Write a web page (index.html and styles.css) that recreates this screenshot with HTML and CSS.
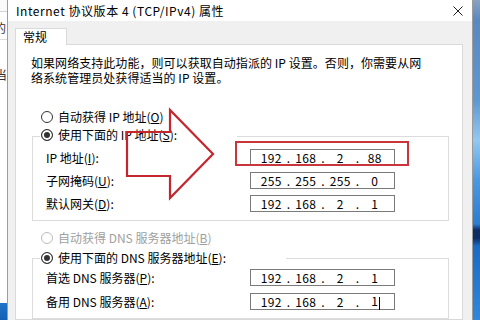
FILE: index.html
```html
<!DOCTYPE html>
<html lang="zh-CN">
<head>
<meta charset="utf-8">
<title>Internet 协议版本 4 (TCP/IPv4) 属性</title>
<link rel="stylesheet" href="styles.css">
</head>
<body>
<div class="screen">
  <div class="bgwin">
    <div class="bg-bar"></div>
    <div class="bg-row bg-r1">的</div>
    <div class="bg-row bg-r2">当</div>
    <div class="bg-fill"></div>
    <div class="bg-desk"></div>
  </div>
  <div class="dialog">
    <div class="titlebar">
      <span class="title">Internet 协议版本 4 (TCP/IPv4) 属性</span>
      <svg class="close" width="10" height="10" viewBox="0 0 10 10"><path d="M0.5 0.5L9.5 9.5M9.5 0.5L0.5 9.5" stroke="#222" stroke-width="1" fill="none"/></svg>
    </div>
    <div class="body">
      <div class="tabs"><div class="tab">常规</div></div>
      <div class="panel">
        <div class="intro">
          <div class="intro-line">如果网络支持此功能，则可以获取自动指派的 IP 设置。否则，你需要从网</div>
          <div class="intro-line">络系统管理员处获得适当的 IP 设置。</div>
        </div>
        <div class="radio standalone r-ip"><span class="dot"></span>自动获得 IP 地址(<u>O</u>)</div>
        <div class="group g-ip">
          <div class="radio legend lg-ip"><span class="dot on"></span>使用下面的 IP 地址(<u>S</u>):</div>
          <div class="rows rows-ip">
            <div class="row"><span class="label">IP 地址(<u>I</u>):</span><div class="field"><span class="seg">192</span><span class="sep">.</span><span class="seg">168</span><span class="sep">.</span><span class="seg">2</span><span class="sep">.</span><span class="seg">88</span></div></div>
            <div class="row"><span class="label">子网掩码(<u>U</u>):</span><div class="field"><span class="seg">255</span><span class="sep">.</span><span class="seg">255</span><span class="sep">.</span><span class="seg">255</span><span class="sep">.</span><span class="seg">0</span></div></div>
            <div class="row"><span class="label">默认网关(<u>D</u>):</span><div class="field"><span class="seg">192</span><span class="sep">.</span><span class="seg">168</span><span class="sep">.</span><span class="seg">2</span><span class="sep">.</span><span class="seg">1</span></div></div>
          </div>
        </div>
        <div class="radio standalone disabled r-dns"><span class="dot"></span>自动获得 DNS 服务器地址(<u>B</u>)</div>
        <div class="group g-dns">
          <div class="radio legend lg-dns"><span class="dot on"></span>使用下面的 DNS 服务器地址(<u>E</u>):</div>
          <div class="rows rows-dns">
            <div class="row"><span class="label">首选 DNS 服务器(<u>P</u>):</span><div class="field"><span class="seg">192</span><span class="sep">.</span><span class="seg">168</span><span class="sep">.</span><span class="seg">2</span><span class="sep">.</span><span class="seg">1</span></div></div>
            <div class="row"><span class="label">备用 DNS 服务器(<u>A</u>):</span><div class="field"><span class="seg">192</span><span class="sep">.</span><span class="seg">168</span><span class="sep">.</span><span class="seg">2</span><span class="sep">.</span><span class="seg">1<i class="caret"></i></span></div></div>
          </div>
        </div>
      </div>
    </div>
  </div>
  <div class="desk"></div>
  <svg class="annot" width="480" height="320" viewBox="0 0 480 320">
    <polygon points="127,132 170,132 170,110 213,154 170,198 170,176 127,176" fill="none" stroke="#c3262c" stroke-width="2.2" stroke-linejoin="miter"/>
    <rect x="236" y="142" width="172" height="23" fill="none" stroke="#c8363b" stroke-width="2"/>
  </svg>
</div>
</body>
</html>
```

FILE: styles.css
```css
html, body {
  margin: 0;
  padding: 0;
}
body {
  width: 480px;
  height: 320px;
  overflow: hidden;
  font-family: "Noto Sans CJK SC", "Microsoft YaHei", sans-serif;
  font-size: 12px;
  color: #000;
}
.screen {
  position: relative;
  width: 480px;
  height: 320px;
  display: flex;
  overflow: hidden;
}

/* background window on the left */
.bgwin {
  width: 7px;
  display: flex;
  flex-direction: column;
  background: #fff;
  overflow: hidden;
}
.bg-bar {
  height: 12px;
  border-bottom: 1px solid #d6d6d6;
  box-sizing: border-box;
  background: #fafafa;
}
.bg-row {
  white-space: nowrap;
  color: #333;
  font-size: 12px;
  line-height: 14px;
}
.bg-r1 {
  height: 28px;
  padding-top: 9px;
  box-sizing: border-box;
  margin-left: -6px;
  border-bottom: 1px solid #dcdcdc;
}
.bg-r2 {
  padding-top: 28px;
  margin-left: -5px;
}
.bg-fill {
  flex: 1;
}
.bg-desk {
  height: 17px;
  background: linear-gradient(#1f73c9, #1560b4);
}

/* dialog */
.dialog {
  width: 466px;
  box-sizing: border-box;
  border-left: 1px solid #9c9c9c;
  border-right: 1px solid #9c9c9c;
  display: flex;
  flex-direction: column;
  background: #f0f0f0;
}
.titlebar {
  height: 21px;
  flex: none;
  background: #fff;
  display: flex;
  align-items: center;
  justify-content: space-between;
  padding: 0 9px 0 8px;
}
.title {
  font-size: 12px;
  line-height: 16px;
  white-space: nowrap;
  letter-spacing: 0.55px;
}
.close {
  display: block;
}
.body {
  flex: 1;
  display: flex;
  flex-direction: column;
  padding: 7px 9px 0 7px;
}
.tabs {
  display: flex;
}
.tab {
  position: relative;
  z-index: 1;
  width: 52px;
  height: 17px;
  box-sizing: border-box;
  border: 1px solid #d9d9d9;
  border-bottom: none;
  background: #fff;
  margin-bottom: -1px;
  padding-left: 7px;
  line-height: 15px;
}
.panel {
  flex: 1;
  background: #fff;
  border: 1px solid #d9d9d9;
  padding: 10px 14px 0 15px;
}
.intro {
  display: flex;
  flex-direction: column;
}
.intro-line {
  height: 15px;
  line-height: 15px;
  white-space: nowrap;
  letter-spacing: 0.05px;
}

/* radios */
.radio {
  display: flex;
  align-items: center;
  height: 16px;
  line-height: 16px;
  white-space: nowrap;
  padding-left: 1px;
}
.standalone {
  margin-left: 9px;
}
.r-ip {
  margin-top: 24px;
}
.r-dns {
  margin-top: 9px;
}
.disabled {
  color: #a0a0a0;
}
.dot {
  width: 12px;
  height: 12px;
  box-sizing: border-box;
  border: 1px solid #333;
  border-radius: 50%;
  background: #fff;
  margin-right: 5px;
  flex: none;
}
.dot.on {
  background: #333;
  box-shadow: inset 0 0 0 2px #fff;
}
.disabled .dot {
  border-color: #bdbdbd;
}

/* group boxes */
.group {
  width: 417px;
  box-sizing: border-box;
  margin-left: 1px;
  border: 1px solid #dcdcdc;
  padding-bottom: 8px;
}
.g-ip {
  margin-top: 11px;
}
.g-dns {
  margin-top: 12px;
}
.legend {
  width: fit-content;
  background: #fff;
  margin-left: 7px;
  padding-right: 60px;
}
.lg-ip {
  margin-top: -10px;
}
.lg-dns {
  margin-top: -9px;
}
.rows {
  display: flex;
  flex-direction: column;
}
.rows-ip {
  margin-top: 6px;
  gap: 6px;
}
.rows-dns {
  margin-top: 3px;
  gap: 7px;
}
.row {
  display: flex;
  align-items: center;
  height: 17px;
  padding-left: 13px;
}
.label {
  width: 204px;
  flex: none;
  white-space: nowrap;
}
.field {
  width: 145px;
  height: 17px;
  box-sizing: border-box;
  border: 1px solid #7a7a7a;
  background: #fff;
  display: flex;
  align-items: center;
  padding-left: 5.5px;
  font-size: 12px;
  line-height: 15px;
  letter-spacing: 0.4px;
}
.seg {
  width: 29.5px;
  flex: none;
  text-align: center;
  white-space: nowrap;
}
.sep {
  width: 5px;
  flex: none;
  text-align: center;
}
.caret {
  display: inline-block;
  width: 1px;
  height: 13px;
  background: #000;
  vertical-align: middle;
  margin-left: 1px;
  margin-right: -2px;
}

/* desktop on the right */
.desk {
  width: 7px;
  background: linear-gradient(to bottom,
    #8aa3bf 0px, #5b88c0 20px, #5f97d0 100px, #94c8f0 140px,
    #4a98e0 180px, #2b7dd0 224px, #0d2d63 230px, #0d2d63 238px,
    #1a6bc3 246px, #2f88dc 320px);
}

/* annotation overlay */
.annot {
  position: absolute;
  left: 0;
  top: 0;
  pointer-events: none;
}
```
